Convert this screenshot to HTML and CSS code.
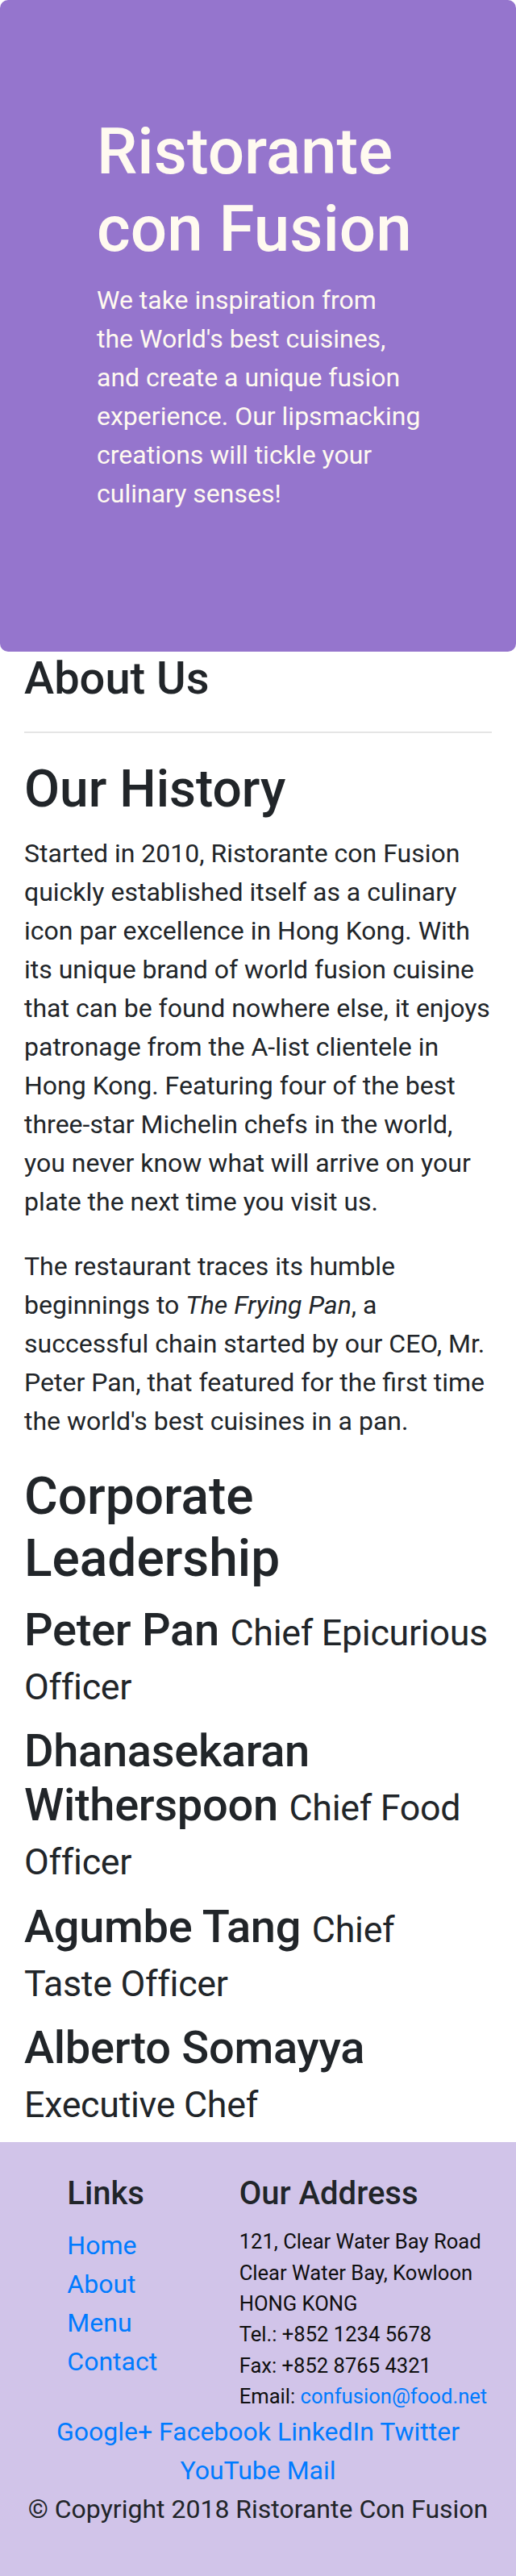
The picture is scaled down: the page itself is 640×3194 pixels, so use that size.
FILE: index.html
```html
<!DOCTYPE html>
<html lang="en">
<head>
<meta charset="utf-8">
<title>Ristorante con Fusion - About Us</title>
<link rel="stylesheet" href="styles.css">
</head>
<body>
<header class="jumbotron">
  <div class="jumbo-inner">
    <h1>Ristorante con Fusion</h1>
    <p>We take inspiration from<br>the World's best cuisines,<br>and create a unique fusion<br>experience. Our lipsmacking<br>creations will tickle your<br>culinary senses!</p>
  </div>
</header>

<main class="content">
  <h3>About Us</h3>
  <hr>
  <h2>Our History</h2>
  <p>Started in 2010, Ristorante con Fusion quickly established itself as a culinary icon par excellence in Hong Kong. With its unique brand of world fusion cuisine that can be found nowhere else, it enjoys patronage from the A-list clientele in Hong Kong. Featuring four of the best three-star Michelin chefs in the world, you never know what will arrive on your plate the next time you visit us.</p>
  <p>The restaurant traces its humble beginnings to <em>The Frying Pan</em>, a successful chain started by our CEO, Mr. Peter Pan, that featured for the first time the world's best cuisines in a pan.</p>
  <h2>Corporate Leadership</h2>
  <h3 class="leader">Peter Pan <small>Chief Epicurious Officer</small></h3>
  <h3 class="leader">Dhanasekaran Witherspoon <small>Chief Food Officer</small></h3>
  <h3 class="leader">Agumbe Tang <small>Chief<br>Taste Officer</small></h3>
  <h3 class="leader">Alberto Somayya <small>Executive Chef</small></h3>
</main>

<footer class="footer">
  <div class="footer-row">
    <div class="col-links">
      <h5>Links</h5>
      <ul class="link-list">
        <li><a href="#">Home</a></li>
        <li><a href="#">About</a></li>
        <li><a href="#">Menu</a></li>
        <li><a href="#">Contact</a></li>
      </ul>
    </div>
    <div class="col-address">
      <h5>Our Address</h5>
      <address>
        121, Clear Water Bay Road<br>
        Clear Water Bay, Kowloon<br>
        HONG KONG<br>
        Tel.: +852 1234 5678<br>
        Fax: +852 8765 4321<br>
        Email: <a href="#">confusion@food.net</a>
      </address>
    </div>
  </div>
  <div class="social">
    <a href="#">Google+</a> <a href="#">Facebook</a> <a href="#">LinkedIn</a> <a href="#">Twitter</a> <a href="#">YouTube</a> <a href="#">Mail</a>
  </div>
  <p class="copyright">© Copyright 2018 Ristorante Con Fusion</p>
</footer>
</body>
</html>
```

FILE: styles.css
```css
html, body {
  margin: 0;
  padding: 0;
}

body {
  font-family: Roboto, "Liberation Sans", sans-serif;
  font-size: 32px;
  line-height: 1.5;
  color: #212529;
  background: #fff;
}

h1, h2, h3, h5 {
  font-weight: 500;
  line-height: 1.2;
  margin: 0 0 16px 0;
}

h1 { font-size: 80px; }
h2 { font-size: 64px; }
h3 { font-size: 56px; }
h5 { font-size: 40px; }

small {
  font-size: 80%;
  font-weight: 400;
}

p {
  margin: 0 0 32px 0;
}

a {
  color: #007bff;
  text-decoration: none;
}

/* Jumbotron */
.jumbotron {
  background: #9575CD;
  color: floralwhite;
  border-radius: 10px;
  padding: 140px 120px;
}

.jumbo-inner {
  width: 440px;
}

/* Main content */
.content {
  padding: 0 30px;
}

.content hr {
  border: 0;
  border-top: 2px solid rgba(0, 0, 0, 0.1);
  margin: 32px 0;
}

.leader {
  letter-spacing: -0.3px;
}

/* Footer */
.footer {
  background-color: #D1C4E9;
  padding: 40px 30px;
}

.footer-row {
  display: flex;
  margin: 0 -30px;
}

.col-links {
  box-sizing: border-box;
  width: 213.33px;
  margin-left: 53.33px;
  padding: 0 30px;
}

.col-address {
  box-sizing: border-box;
  width: 373.33px;
  padding: 0 30px;
}

.link-list {
  list-style: none;
  margin: 0 0 32px 0;
  padding: 0;
}

address {
  font-style: normal;
  font-size: 80%;
  margin: 0;
  color: #0f0f0f;
}

.social {
  text-align: center;
}

.copyright {
  text-align: center;
}
```
